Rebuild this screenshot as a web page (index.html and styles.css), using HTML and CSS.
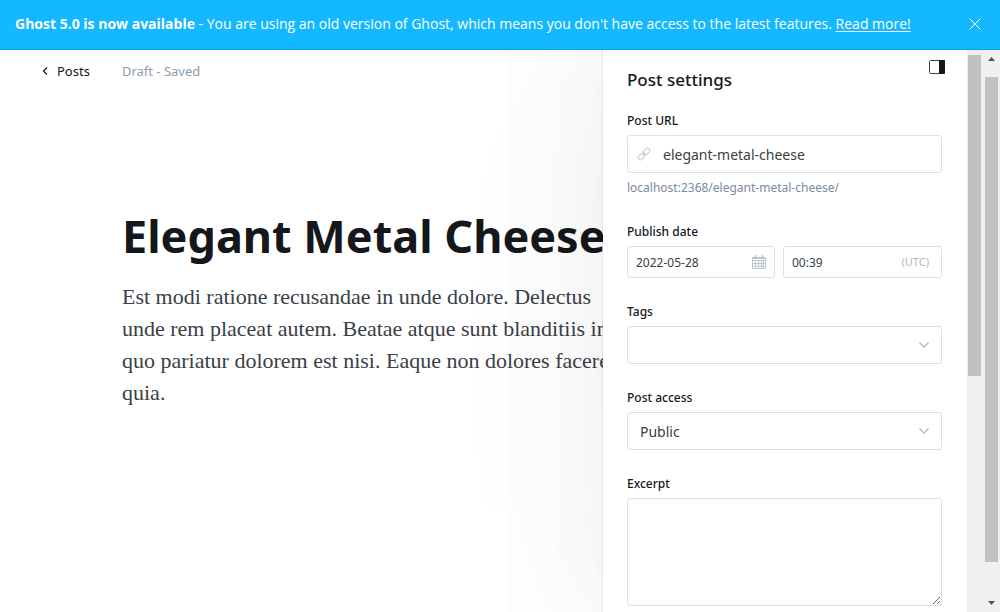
FILE: index.html
```html
<!DOCTYPE html>
<html lang="en">
<head>
<meta charset="utf-8">
<meta name="viewport" content="width=device-width, initial-scale=1">
<title>Elegant Metal Cheese - Ghost</title>
<link rel="stylesheet" href="styles.css">
</head>
<body>
<div class="app">
  <aside class="banner">
    <p class="banner-text"><strong>Ghost 5.0 is now available</strong> - You are using an old version of Ghost, which means you don't have access to the latest features. <a href="#">Read more!</a></p>
    <button class="icon-button" type="button" aria-label="Close">
      <svg width="14" height="14" viewBox="0 0 14 14" fill="none" stroke="#fff"><path d="M1.500 1.500l11 11M12.500 1.500l-11 11"/></svg>
    </button>
  </aside>
  <div class="workspace">
    <main class="editor">
      <header class="editor-header">
        <a class="back" href="#">
          <svg width="6" height="8" viewBox="0 0 6 8" fill="none" stroke="#15171a" stroke-width="1.2"><path d="M5 .5L1.500 4 5 7.500"/></svg>
          Posts
        </a>
        <span class="status">Draft - Saved</span>
      </header>
      <article class="post">
        <h1 class="post-title">Elegant Metal Cheese</h1>
        <p class="post-body">Est modi ratione recusandae in unde dolore. Delectus<br>unde rem placeat autem. Beatae atque sunt blanditiis in<br>quo pariatur dolorem est nisi. Eaque non dolores facere<br>quia.</p>
      </article>
    </main>
    <section class="settings">
      <header class="settings-header">
        <h2 class="settings-title">Post settings</h2>
        <button class="icon-button sidebar-toggle" type="button" aria-label="Toggle settings">
          <svg width="16" height="14" viewBox="0 0 16 14"><rect x=".5" y=".5" width="15" height="13" rx="1" fill="#fff" stroke="#394047"/><path d="M10 0h5a1 1 0 0 1 1 1v12a1 1 0 0 1-1 1h-5z" fill="#15171a"/></svg>
        </button>
      </header>
      <form class="fields">
        <div class="field">
          <label for="url">Post URL</label>
          <div class="control">
            <svg width="14" height="14" viewBox="0 0 14 14" fill="none" stroke="#c3c7cb" stroke-width="1"><rect x="-3.700" y="-2.300" width="7.400" height="4.600" rx="2.300" transform="translate(4.500 9.500) rotate(-45)"/><rect x="-3.700" y="-2.300" width="7.400" height="4.600" rx="2.300" transform="translate(9.500 4.500) rotate(-45)"/><path d="M5.200 8.800l3.600-3.600"/></svg>
            <input id="url" type="text" value="elegant-metal-cheese">
          </div>
          <p class="hint">localhost:2368/elegant-metal-cheese/</p>
        </div>
        <div class="field">
          <label for="date">Publish date</label>
          <div class="date-row">
            <div class="control small">
              <input id="date" type="text" value="2022-05-28">
              <svg width="14" height="14" viewBox="0 0 14 14" fill="none" stroke="#b5bcc4"><path d="M.5 2.500h13v11H.5zM.5 5.500h13M3.500 5v8.500M6.500 5v8.500M9.500 5v8.500M11.500 5v8.500M.5 8.500h13M.5 11h13" stroke-width=".8"/><path d="M1 3.500h12M3.500 0v3M10.500 0v3" stroke-width="1.200"/></svg>
            </div>
            <div class="control small">
              <input id="time" type="text" value="00:39" aria-label="Publish time">
              <span class="zone">(UTC)</span>
            </div>
          </div>
        </div>
        <div class="field">
          <label for="tags">Tags</label>
          <div class="control">
            <input id="tags" type="text">
            <svg width="10" height="6" viewBox="0 0 10 6" fill="none" stroke="#aeb7c1" stroke-width="1.200"><path d="M.5.5L5 5.200 9.500.5"/></svg>
          </div>
        </div>
        <div class="field">
          <label for="access">Post access</label>
          <div class="control">
            <select id="access"><option>Public</option><option>Members only</option></select>
            <svg width="10" height="6" viewBox="0 0 10 6" fill="none" stroke="#aeb7c1" stroke-width="1.200"><path d="M.5.5L5 5.200 9.500.5"/></svg>
          </div>
        </div>
        <div class="field">
          <label for="excerpt">Excerpt</label>
          <textarea id="excerpt"></textarea>
        </div>
      </form>
    </section>
    <div class="track panel-track"><div class="thumb"></div></div>
    <div class="track page-track">
      <svg width="7" height="4" viewBox="0 0 7 4"><path d="M0 4L3.500 0 7 4z" fill="#505050"/></svg>
      <div class="thumb"></div>
      <svg width="7" height="4" viewBox="0 0 7 4"><path d="M0 0l3.500 4L7 0z" fill="#505050"/></svg>
    </div>
  </div>
</div>
</body>
</html>
```
FILE: styles.css
```css
* { box-sizing: border-box; }

body {
  margin: 0;
  background: #fff;
  color: #15171a;
  font-family: "Noto Sans", "Open Sans", sans-serif;
  font-size: 13px;
  line-height: 20px;
}

h1, h2, p { margin: 0; }

.app {
  display: flex;
  flex-direction: column;
  height: 100vh;
  overflow: hidden;
}

.banner {
  display: flex;
  flex: none;
  align-items: center;
  justify-content: space-between;
  padding: 14px 15px 15px;
  border-bottom: 1px solid #0f9fe0;
  background: #14b8ff;
  color: #fff;
  font-family: "Open Sans", "Noto Sans", sans-serif;
  font-size: 14px;
}

.banner-text { white-space: nowrap; }
.banner a { color: inherit; text-underline-offset: 2px; }

.icon-button {
  display: flex;
  padding: 3px;
  border: 0;
  background: none;
}

.workspace {
  display: flex;
  flex: 1;
  min-height: 0;
  overflow: hidden;
}

.editor {
  flex: 1;
  min-width: 0;
  white-space: nowrap;
}

.editor-header {
  display: flex;
  gap: 32px;
  padding: 11px 42px;
}

.back {
  display: flex;
  align-items: center;
  gap: 9px;
  color: #15171a;
  text-decoration: none;
}

.status { color: #8e9cac; }

.post { padding: 112px 0 0 122px; }

.post-title {
  font-size: 45px;
  line-height: 64px;
  font-weight: 700;
}

.post-body {
  margin-top: 13px;
  color: #394047;
  font-family: Georgia, "Liberation Serif", serif;
  font-size: 22px;
  line-height: 32px;
}

.settings {
  position: relative;
  flex: 0 0 364px;
  padding: 0 25px 0 24px;
  background: #fff;
  box-shadow:
    0 0 1px rgba(0, 0, 0, 0.3),
    0 0 16px rgba(0, 0, 0, 0.02),
    0 0 80px rgba(0, 0, 0, 0.03),
    0 0 280px rgba(0, 0, 0, 0.07);
}

.settings-header {
  display: flex;
  align-items: flex-start;
  justify-content: space-between;
  padding-top: 7px;
}

.settings-title {
  padding-top: 11px;
  font-size: 17px;
  line-height: 24px;
  font-weight: 500;
}

.sidebar-toggle { margin-right: -6px; }

.fields {
  display: flex;
  flex-direction: column;
  gap: 24px;
  padding-top: 19px;
}

.field label {
  display: block;
  margin-bottom: 4px;
  font-size: 12px;
  font-weight: 500;
}

.control {
  display: flex;
  align-items: center;
  min-width: 0;
  height: 38px;
  padding: 0 12px 0 9px;
  border: 1px solid #dddfe1;
  border-radius: 3px;
  background: #fff;
}

.control svg { flex: none; }

.control input,
.control select {
  flex: 1;
  min-width: 0;
  padding: 2px 0 0 12px;
  border: 0;
  outline: 0;
  appearance: none;
  background: none;
  color: #394047;
  font: inherit;
  font-size: 14px;
}

.control select { padding-left: 3px; }

.control.small {
  height: 32px;
  padding: 0 8px;
}

.control.small input {
  padding: 2px 0 0;
  font-size: 12px;
}

.date-row {
  display: grid;
  grid-template-columns: minmax(0, 148fr) minmax(0, 159fr);
  gap: 8px;
}

.hint {
  margin-top: 5px;
  color: #7c8b9a;
  font-size: 12px;
}

.zone {
  padding-right: 4px;
  color: #aeb7c1;
  font-size: 11px;
}

textarea {
  display: block;
  width: 100%;
  height: 108px;
  border: 1px solid #dddfe1;
  border-radius: 3px;
  outline: 0;
  background: #fff;
  font: inherit;
  resize: vertical;
}

.track {
  position: relative;
  z-index: 1;
  flex: none;
  background: #f0f0f0;
}

.panel-track {
  width: 16px;
  padding: 5px 2px 0 1px;
}

.panel-track .thumb { height: 321px; }

.page-track {
  display: flex;
  flex-direction: column;
  align-items: center;
  width: 17px;
  padding: 7px 2px;
}

.page-track .thumb {
  flex: 1;
  width: 13px;
  margin: 16px 0 39px;
}

.thumb { background: #c1c1c1; }
```
